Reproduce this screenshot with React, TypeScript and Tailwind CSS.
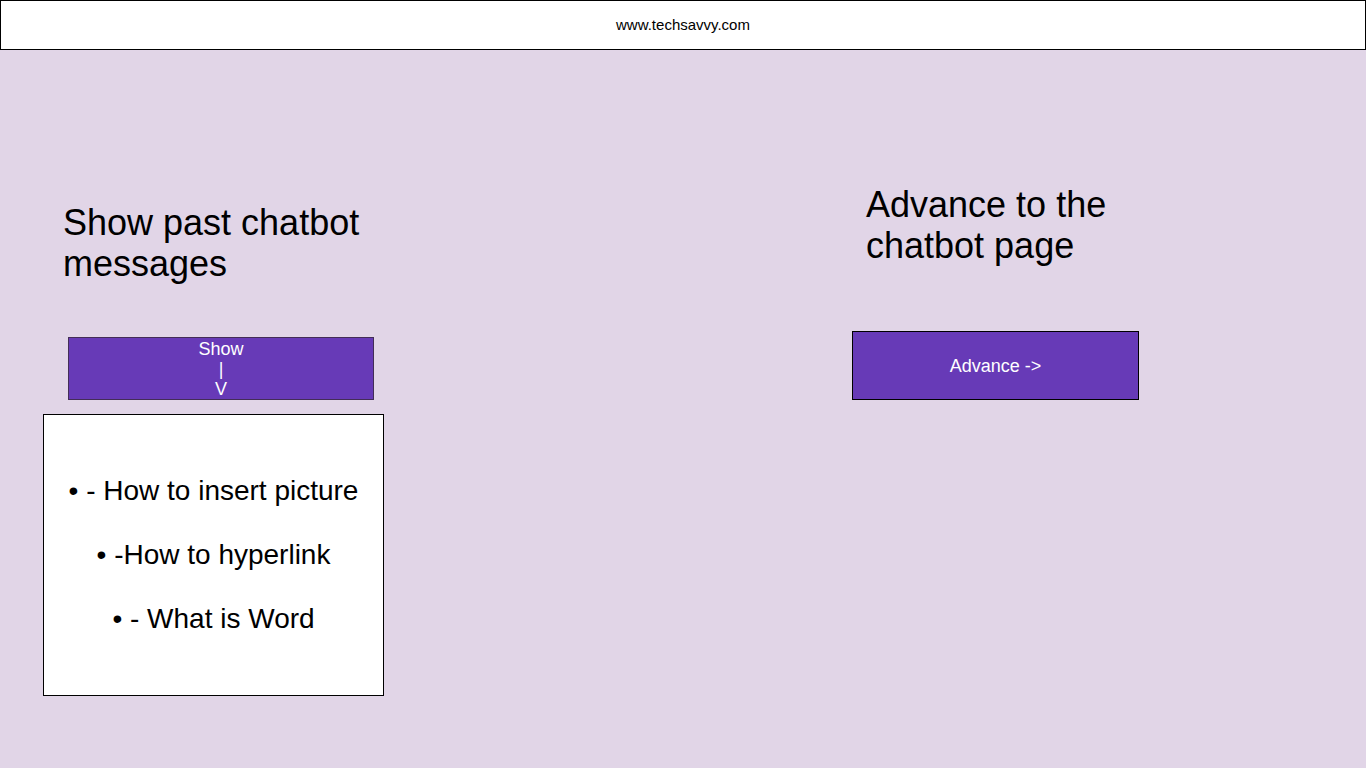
export default function App() {
  return (
    <div className="w-[1366px] h-[768px] bg-[#e1d5e7] overflow-hidden" style={{ fontFamily: '"Liberation Sans", Arial, sans-serif' }}>
      <header className="h-[50px] pb-[2px] bg-white border border-black flex items-center justify-center">
        <span className="text-[15px] leading-[17px] text-black">www.techsavvy.com</span>
      </header>
      <div className="flex">
        <div className="ml-[43px] w-[341px] flex flex-col">
          <h1 className="mt-[152px] ml-[20px] text-[36px] leading-[41px] text-black">
            Show past chatbot
            <br />
            messages
          </h1>
          <button className="mt-[53px] ml-[25px] w-[306px] h-[63px] bg-[#673ab7] border border-[#432d57] text-white text-[18px] leading-[20px] flex flex-col items-center justify-center">
            <span>Show</span>
            <span>|</span>
            <span>V</span>
          </button>
          <div className="mt-[14px] w-[341px] h-[282px] bg-white border border-black flex flex-col items-center justify-center gap-[32px] text-[28px] leading-[32px] text-black">
            <span>• - How to insert picture</span>
            <span>• -How to hyperlink</span>
            <span>• - What is Word</span>
          </div>
        </div>
        <div className="ml-[468px] w-[300px] flex flex-col">
          <h1 className="mt-[134px] ml-[14px] text-[36px] leading-[41px] text-black">
            Advance to the
            <br />
            chatbot page
          </h1>
          <button className="mt-[65px] w-[287px] h-[69px] bg-[#673ab7] border border-black text-white text-[18px] leading-[20px] flex items-center justify-center">
            Advance -&gt;
          </button>
        </div>
      </div>
    </div>
  );
}
